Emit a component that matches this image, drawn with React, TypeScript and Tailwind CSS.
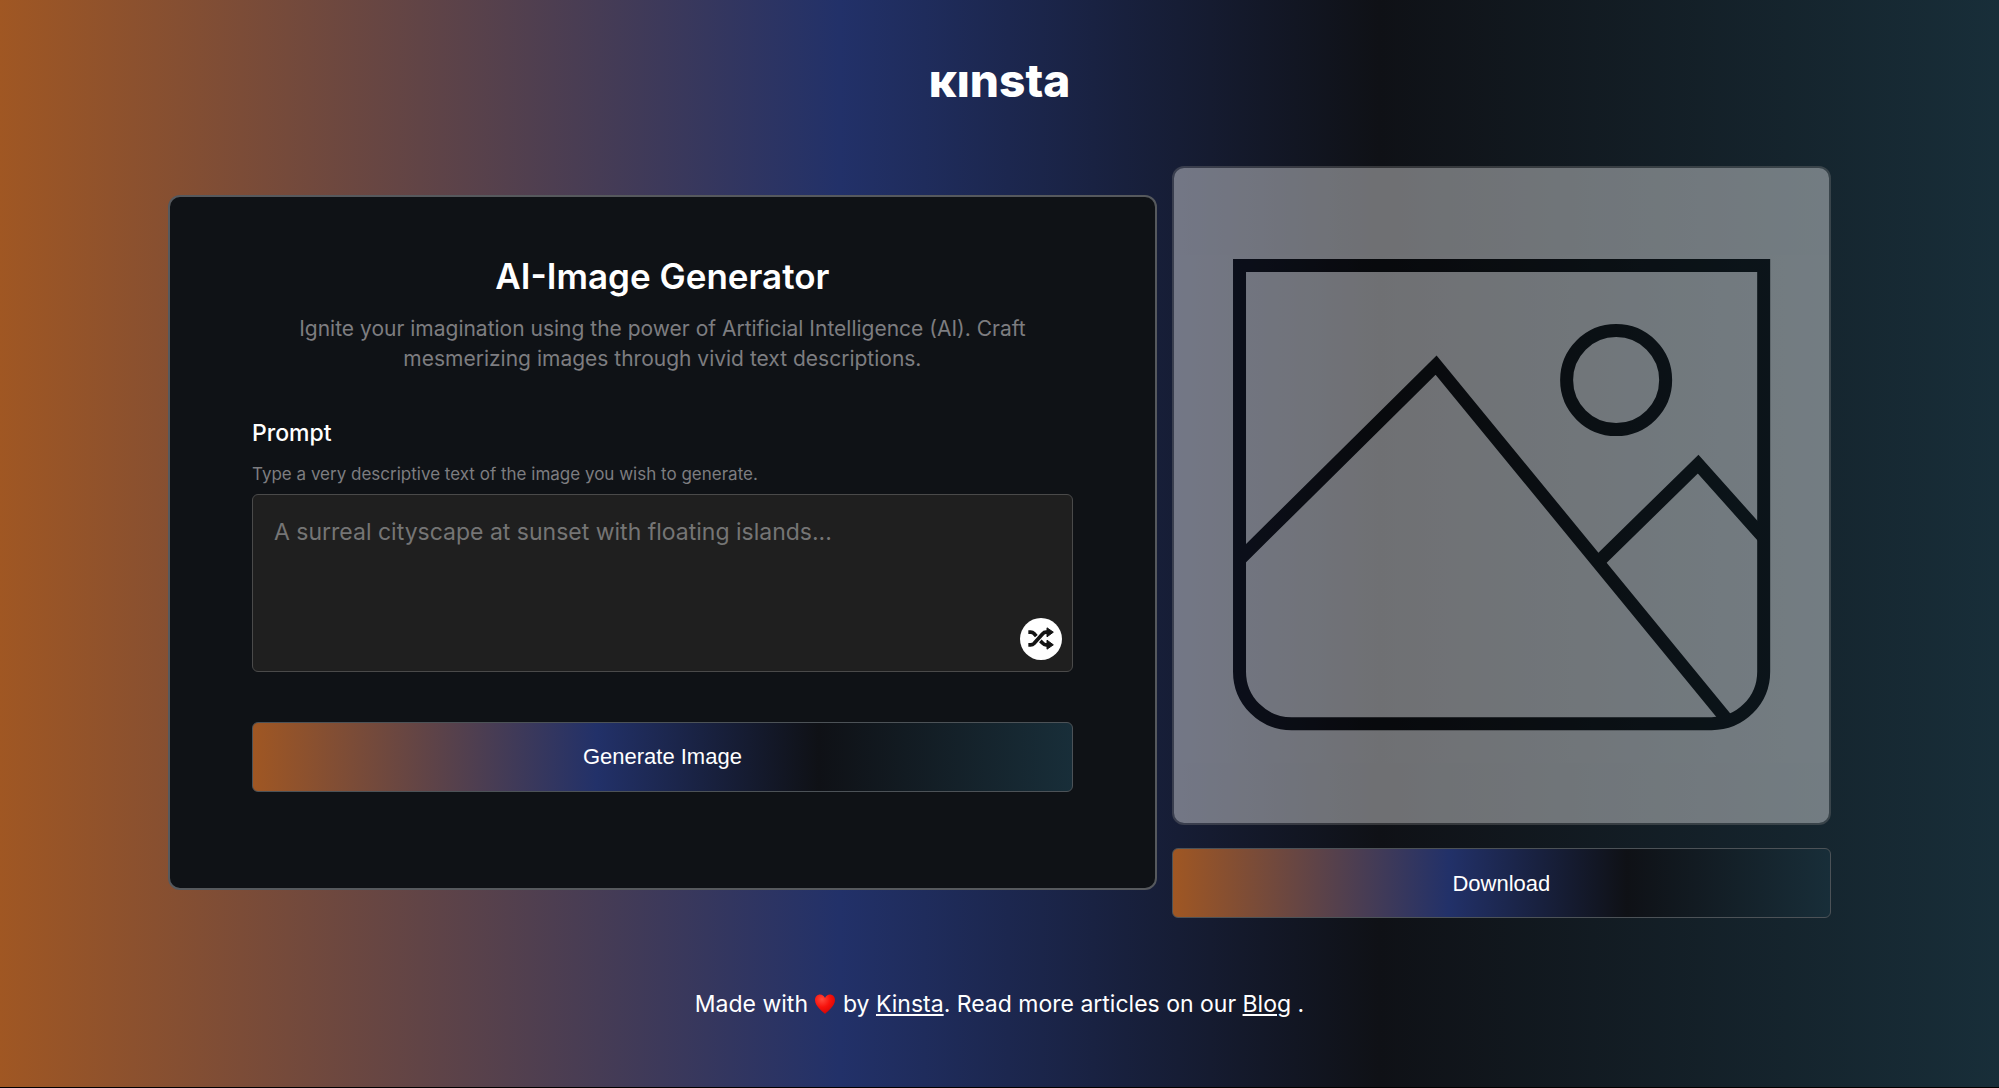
import React from "react";

const gradient =
  "bg-[linear-gradient(90deg,#a05723_0%,#223169_42%,#0f1116_69%,#182e39_100%)]";

function Logo() {
  return (
    <header className="flex h-[166px] justify-center pt-[54px]">
      <div
        aria-label="Kinsta"
        className="text-[46px] leading-[52px] font-extrabold text-white"
      >
        ĸınsta
      </div>
    </header>
  );
}

function Heart() {
  return (
    <svg viewBox="0 0 24 22" className="inline h-[20px] w-[22px] align-[-2px]" role="img" aria-label="love">
      <defs>
        <radialGradient id="heart" cx="0.35" cy="0.25" r="0.8">
          <stop offset="0" stopColor="#ff4a3d" />
          <stop offset="0.5" stopColor="#f8130c" />
          <stop offset="1" stopColor="#cf0404" />
        </radialGradient>
      </defs>
      <path
        fill="url(#heart)"
        d="M12 22C10.500 19.500 1 14 1 6.500 1 2.800 3.600.5 6.600.5 9 .5 11 2 12 4.300 13 2 15 .5 17.400.5c3 0 5.600 2.300 5.600 6C23 14 13.500 19.500 12 22Z"
      />
    </svg>
  );
}

function ShuffleIcon() {
  return (
    <svg viewBox="0 0 78 68" className="h-[23px] w-[26px]" aria-hidden="true">
      <g fill="none" stroke="currentColor" strokeWidth="11">
        <path d="M1 15H8Q14 15 18 19L25 27" />
        <path d="M1 53H8Q14 53 18 49L44 20Q48 15 54 15H58" />
        <path d="M37 41 44 48Q48 53 54 53H58" />
      </g>
      <path
        fill="currentColor"
        stroke="currentColor"
        strokeWidth="3"
        strokeLinejoin="round"
        d="M57 2 76 15 57 29ZM57 39 76 53 57 66Z"
      />
    </svg>
  );
}

function ActionButton({ children }: { children: React.ReactNode }) {
  return (
    <button
      type="button"
      className={`${gradient} block h-[70px] w-full cursor-pointer rounded-md border border-[#4c5257] bg-origin-border font-['Liberation_Sans',Arial,sans-serif] text-[22px] text-white`}
    >
      {children}
    </button>
  );
}

function PromptCard() {
  return (
    <section className="min-w-0 rounded-xl border-2 border-[#56595d] bg-[#0f1216] px-[82px] pt-[57px] pb-24">
      <h1 className="text-center text-[35px] leading-[44px] font-semibold text-white">
        AI-Image Generator
      </h1>
      <p className="mt-4 px-8 text-center text-[21px] leading-[30px] text-[#7d7d80]">
        Ignite your imagination using the power of Artificial Intelligence (AI). Craft mesmerizing images through
        vivid text descriptions.
      </p>
      <form onSubmit={(e) => e.preventDefault()}>
        <label htmlFor="prompt" className="mt-11 block text-[23px] leading-[30px] font-medium text-white">
          Prompt
        </label>
        <p id="prompt-hint" className="mt-[14px] text-[17px] leading-6 text-[#7d7d80]">
          Type a very descriptive text of the image you wish to generate.
        </p>
        <div className="relative mt-2">
          <textarea
            id="prompt"
            aria-describedby="prompt-hint"
            placeholder="A surreal cityscape at sunset with floating islands..."
            className="block h-[178px] w-full resize-none rounded-md border border-[#4a4a4a] bg-[#1f1f1f] px-[21px] py-[21px] text-[23px] leading-[33px] text-white placeholder:text-[#757575] focus:outline-none"
          />
          <button
            type="button"
            aria-label="Random prompt"
            className="absolute right-[11px] bottom-3 flex size-[42px] items-center justify-center rounded-full bg-white text-[#141414]"
          >
            <ShuffleIcon />
          </button>
        </div>
        <div className="mt-[50px]">
          <ActionButton>Generate Image</ActionButton>
        </div>
      </form>
    </section>
  );
}

function ImagePreview() {
  return (
    <section className="min-w-0">
      <div className="overflow-hidden rounded-xl border-2 border-[#80808055]">
        <svg
          viewBox="0 0 655 655"
          className="block w-full bg-white opacity-40"
          fill="none"
          stroke="#000"
          strokeWidth="13"
          role="img"
          aria-label="Image placeholder"
        >
          <path d="M65.500 97.500H589.500V503.500A52 52 0 0 1 537.500 555.500H117.500A52 52 0 0 1 65.500 503.500Z" />
          <path d="M66 391 262 197 554 553" />
          <path d="M427 391 524 296 590 370" />
          <circle cx="442" cy="212" r="49.500" />
        </svg>
      </div>
      <div className="mt-[23px]">
        <ActionButton>Download</ActionButton>
      </div>
    </section>
  );
}

export default function App() {
  return (
    <div
      className={`${gradient} flex min-h-screen flex-col border-b border-black font-['Inter',sans-serif]`}
    >
      <Logo />
      <main className="grid grid-cols-[3fr_2fr] items-center gap-[15px] px-[168px]">
        <PromptCard />
        <ImagePreview />
      </main>
      <footer className="pt-[70px] pb-8 text-center text-[23px] leading-[33px] text-white">
        Made with <Heart /> by{" "}
        <a href="#kinsta" className="underline">
          Kinsta
        </a>
        . Read more articles on our{" "}
        <a href="#blog" className="underline">
          Blog
        </a>{" "}
        .
      </footer>
    </div>
  );
}
